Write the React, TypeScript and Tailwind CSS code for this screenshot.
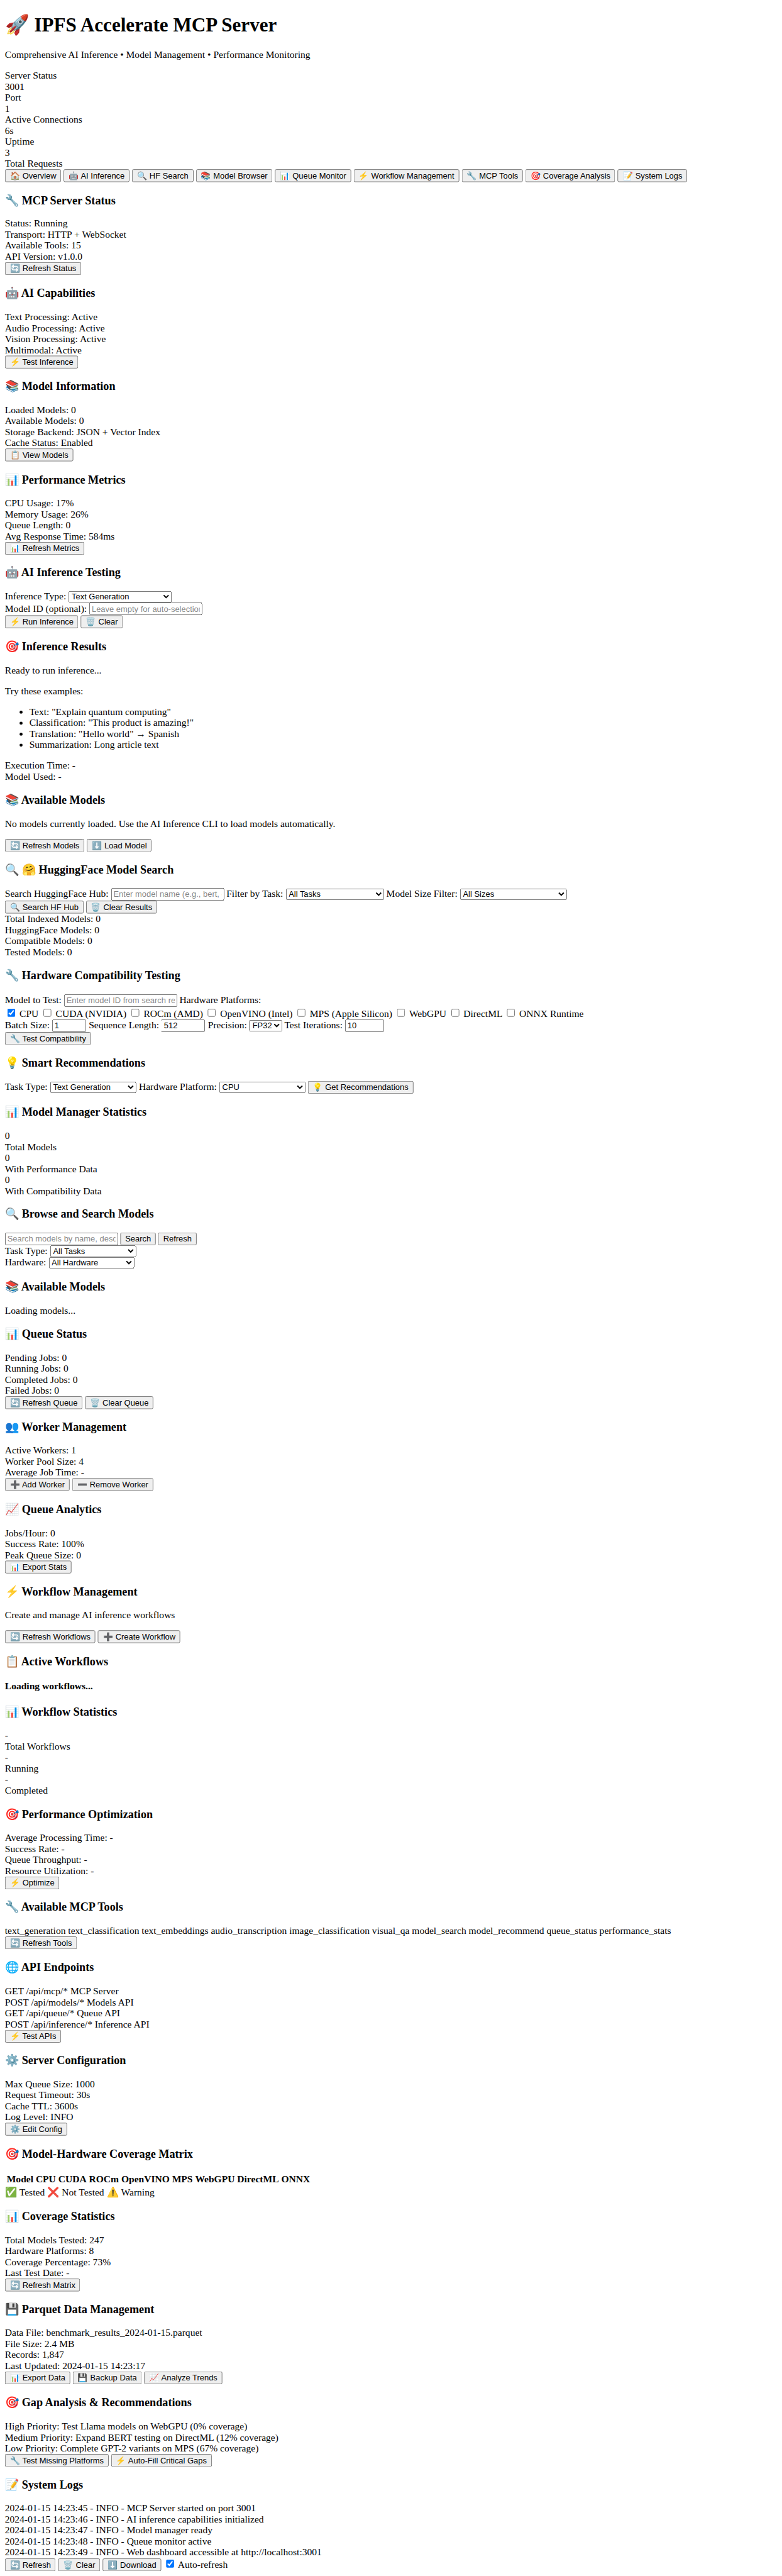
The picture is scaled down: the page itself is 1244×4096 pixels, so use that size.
import type { ReactNode } from 'react';

function Title({ children }: { children: ReactNode }) {
  return <h3 className="my-[18.72px] text-[18.72px] font-bold">{children}</h3>;
}

function Lines({ items }: { items: string[] }) {
  return (
    <div>
      {items.map((t, i) => (
        <div key={i}>{t}</div>
      ))}
    </div>
  );
}

function Buttons({ items }: { items: string[] }) {
  return (
    <div>
      {items.map((t, i) => (
        <span key={i}>
          <button className="[all:revert]">{t}</button>{' '}
        </span>
      ))}
    </div>
  );
}

function Select({ label, value, width }: { label: string; value: string; width: string }) {
  return (
    <>
      <label>{label}</label>{' '}
      <select className={`[all:revert] ${width}`}>
        <option>{value}</option>
      </select>
    </>
  );
}

function Section({ title, lines, buttons, children }: { title: string; lines?: string[]; buttons?: string[]; children?: ReactNode }) {
  return (
    <section>
      <Title>{title}</Title>
      {children}
      {lines && <Lines items={lines} />}
      {buttons && <Buttons items={buttons} />}
    </section>
  );
}

const platforms = ['CPU', 'CUDA (NVIDIA)', 'ROCm (AMD)', 'OpenVINO (Intel)', 'MPS (Apple Silicon)', 'WebGPU', 'DirectML', 'ONNX Runtime'];
const columns = ['Model', 'CPU', 'CUDA', 'ROCm', 'OpenVINO', 'MPS', 'WebGPU', 'DirectML', 'ONNX'];

export default function App() {
  return (
    <div className="h-[4096px] w-[1244px] overflow-hidden bg-white">
      <main className="h-[4216px] w-[1280px] origin-top-left scale-[0.9716] px-2 pt-[21.44px] font-['Liberation_Serif',serif] text-[16px] leading-[normal] text-black">
        <h1 className="mb-[21.44px] text-[32px] font-bold">🚀 IPFS Accelerate MCP Server</h1>
        <p className="my-4">Comprehensive AI Inference • Model Management • Performance Monitoring</p>
        <Lines items={['Server Status', '3001', 'Port', '1', 'Active Connections', '6s', 'Uptime', '3', 'Total Requests']} />
        <Buttons
          items={['🏠 Overview', '🤖 AI Inference', '🔍 HF Search', '📚 Model Browser', '📊 Queue Monitor', '⚡ Workflow Management', '🔧 MCP Tools', '🎯 Coverage Analysis', '📝 System Logs']}
        />

        <Section title="🔧 MCP Server Status" lines={['Status: Running', 'Transport: HTTP + WebSocket', 'Available Tools: 15', 'API Version: v1.0.0']} buttons={['🔄 Refresh Status']} />
        <Section title="🤖 AI Capabilities" lines={['Text Processing: Active', 'Audio Processing: Active', 'Vision Processing: Active', 'Multimodal: Active']} buttons={['⚡ Test Inference']} />
        <Section title="📚 Model Information" lines={['Loaded Models: 0', 'Available Models: 0', 'Storage Backend: JSON + Vector Index', 'Cache Status: Enabled']} buttons={['📋 View Models']} />
        <Section title="📊 Performance Metrics" lines={['CPU Usage: 17%', 'Memory Usage: 26%', 'Queue Length: 0', 'Avg Response Time: 584ms']} buttons={['📊 Refresh Metrics']} />

        <Section title="🤖 AI Inference Testing">
          <div>
            <Select label="Inference Type:" value="Text Generation" width="w-[168.5px]!" />
          </div>
          <div>
            <label>Model ID (optional):</label> <input className="[all:revert]" placeholder="Leave empty for auto-selection" />
          </div>
          <Buttons items={['⚡ Run Inference', '🗑️ Clear']} />
        </Section>

        <Section title="🎯 Inference Results">
          <p className="my-4">Ready to run inference...</p>
          <p className="my-4">Try these examples:</p>
          <ul className="my-4 list-disc pl-10">
            <li>Text: "Explain quantum computing"</li>
            <li>Classification: "This product is amazing!"</li>
            <li>Translation: "Hello world" → Spanish</li>
            <li>Summarization: Long article text</li>
          </ul>
          <Lines items={['Execution Time: -', 'Model Used: -']} />
        </Section>

        <Section title="📚 Available Models" buttons={['🔄 Refresh Models', '⬇️ Load Model']}>
          <p className="my-4">No models currently loaded. Use the AI Inference CLI to load models automatically.</p>
        </Section>

        <Section title="🔍 🤗 HuggingFace Model Search">
          <div>
            <label>Search HuggingFace Hub:</label> <input className="[all:revert]" placeholder="Enter model name (e.g., bert, gpt2)" />{' '}
            <Select label="Filter by Task:" value="All Tasks" width="w-[161px]!" /> <Select label="Model Size Filter:" value="All Sizes" width="w-[175px]!" />
          </div>
          <Buttons items={['🔍 Search HF Hub', '🗑️ Clear Results']} />
          <Lines items={['Total Indexed Models: 0', 'HuggingFace Models: 0', 'Compatible Models: 0', 'Tested Models: 0']} />
        </Section>

        <Section title="🔧 Hardware Compatibility Testing">
          <div>
            <label>Model to Test:</label> <input className="[all:revert]" placeholder="Enter model ID from search results" /> <label>Hardware Platforms:</label>
          </div>
          <div>
            {platforms.map((p, i) => (
              <span key={p}>
                <label>
                  <input type="checkbox" className="[all:revert]" defaultChecked={i === 0} /> {p}
                </label>{' '}
              </span>
            ))}
          </div>
          <div>
            <label>Batch Size:</label> <input type="number" className="[all:revert] w-[56px]! box-border!" defaultValue="1" /> <label>Sequence Length:</label>{' '}
            <input type="number" className="[all:revert] w-[72px]! box-border!" defaultValue="512" /> <Select label="Precision:" value="FP32" width="w-[53.5px]!" />{' '}
            <label>Test Iterations:</label> <input type="number" className="[all:revert] w-[64px]! box-border!" defaultValue="10" />
          </div>
          <Buttons items={['🔧 Test Compatibility']} />
        </Section>

        <Section title="💡 Smart Recommendations">
          <div>
            <Select label="Task Type:" value="Text Generation" width="w-[141.5px]!" /> <Select label="Hardware Platform:" value="CPU" width="w-[140.7px]!" />{' '}
            <button className="[all:revert]">💡 Get Recommendations</button>
          </div>
        </Section>

        <Section title="📊 Model Manager Statistics" lines={['0', 'Total Models', '0', 'With Performance Data', '0', 'With Compatibility Data']} />

        <Section title="🔍 Browse and Search Models">
          <div>
            <input className="[all:revert]" placeholder="Search models by name, description" /> <button className="[all:revert]">Search</button>{' '}
            <button className="[all:revert]">Refresh</button>
          </div>
          <div>
            <Select label="Task Type:" value="All Tasks" width="w-[141.5px]!" />
          </div>
          <div>
            <Select label="Hardware:" value="All Hardware" width="w-[140.7px]!" />
          </div>
        </Section>

        <Section title="📚 Available Models" lines={['Loading models...']} />
        <Section title="📊 Queue Status" lines={['Pending Jobs: 0', 'Running Jobs: 0', 'Completed Jobs: 0', 'Failed Jobs: 0']} buttons={['🔄 Refresh Queue', '🗑️ Clear Queue']} />
        <Section title="👥 Worker Management" lines={['Active Workers: 1', 'Worker Pool Size: 4', 'Average Job Time: -']} buttons={['➕ Add Worker', '➖ Remove Worker']} />
        <Section title="📈 Queue Analytics" lines={['Jobs/Hour: 0', 'Success Rate: 100%', 'Peak Queue Size: 0']} buttons={['📊 Export Stats']} />

        <Section title="⚡ Workflow Management" buttons={['🔄 Refresh Workflows', '➕ Create Workflow']}>
          <p className="my-4">Create and manage AI inference workflows</p>
        </Section>
        <Section title="📋 Active Workflows">
          <h4 className="my-[21.28px] font-bold">Loading workflows...</h4>
        </Section>
        <Section title="📊 Workflow Statistics" lines={['-', 'Total Workflows', '-', 'Running', '-', 'Completed']} />
        <Section title="🎯 Performance Optimization" lines={['Average Processing Time: -', 'Success Rate: -', 'Queue Throughput: -', 'Resource Utilization: -']} buttons={['⚡ Optimize']} />
        <Section
          title="🔧 Available MCP Tools"
          lines={['text_generation text_classification text_embeddings audio_transcription image_classification visual_qa model_search model_recommend queue_status performance_stats']}
          buttons={['🔄 Refresh Tools']}
        />
        <Section title="🌐 API Endpoints" lines={['GET /api/mcp/* MCP Server', 'POST /api/models/* Models API', 'GET /api/queue/* Queue API', 'POST /api/inference/* Inference API']} buttons={['⚡ Test APIs']} />
        <Section title="⚙️ Server Configuration" lines={['Max Queue Size: 1000', 'Request Timeout: 30s', 'Cache TTL: 3600s', 'Log Level: INFO']} buttons={['⚙️ Edit Config']} />

        <Section title="🎯 Model-Hardware Coverage Matrix" lines={['✅ Tested ❌ Not Tested ⚠️ Warning']}>
          <table className="border-separate border-spacing-[2px]">
            <thead>
              <tr>
                {columns.map((c) => (
                  <th key={c} className="p-px font-bold">
                    {c}
                  </th>
                ))}
              </tr>
            </thead>
          </table>
        </Section>
        <Section title="📊 Coverage Statistics" lines={['Total Models Tested: 247', 'Hardware Platforms: 8', 'Coverage Percentage: 73%', 'Last Test Date: -']} buttons={['🔄 Refresh Matrix']} />
        <Section
          title="💾 Parquet Data Management"
          lines={['Data File: benchmark_results_2024-01-15.parquet', 'File Size: 2.4 MB', 'Records: 1,847', 'Last Updated: 2024-01-15 14:23:17']}
          buttons={['📊 Export Data', '💾 Backup Data', '📈 Analyze Trends']}
        />
        <Section
          title="🎯 Gap Analysis & Recommendations"
          lines={['High Priority: Test Llama models on WebGPU (0% coverage)', 'Medium Priority: Expand BERT testing on DirectML (12% coverage)', 'Low Priority: Complete GPT-2 variants on MPS (67% coverage)']}
          buttons={['🔧 Test Missing Platforms', '⚡ Auto-Fill Critical Gaps']}
        />
        <Section title="📝 System Logs">
          <Lines
            items={[
              '2024-01-15 14:23:45 - INFO - MCP Server started on port 3001',
              '2024-01-15 14:23:46 - INFO - AI inference capabilities initialized',
              '2024-01-15 14:23:47 - INFO - Model manager ready',
              '2024-01-15 14:23:48 - INFO - Queue monitor active',
              '2024-01-15 14:23:49 - INFO - Web dashboard accessible at http://localhost:3001',
            ]}
          />
          <div>
            <button className="[all:revert]">🔄 Refresh</button> <button className="[all:revert]">🗑️ Clear</button> <button className="[all:revert]">⬇️ Download</button>{' '}
            <label>
              <input type="checkbox" className="[all:revert]" defaultChecked /> Auto-refresh
            </label>
          </div>
        </Section>
      </main>
    </div>
  );
}
